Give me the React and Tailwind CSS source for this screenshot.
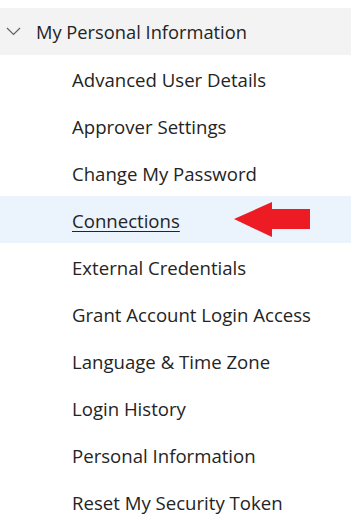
import React from 'react';

const items = [
  'Advanced User Details',
  'Approver Settings',
  'Change My Password',
  'Connections',
  'External Credentials',
  'Grant Account Login Access',
  'Language & Time Zone',
  'Login History',
  'Personal Information',
  'Reset My Security Token',
];

const App = () => {
  return (
    <div className="w-[351px] h-[525px] overflow-hidden bg-white pt-2 text-[#242424]" style={{ fontFamily: '"Open Sans", sans-serif' }}>
      {/* Section header */}
      <div className="h-[47px] flex items-center bg-[#f3f3f3]">
        <svg className="ml-[6px] w-[15px] h-[9px]" viewBox="0 0 15 9" fill="none">
          <path d="M1 1 L7.5 7.5 L14 1" stroke="#616161" strokeWidth="1.2" />
        </svg>
        <span className="ml-[15px] text-[18.3px]">My Personal Information</span>
      </div>

      {/* Items */}
      {items.map((label) => {
        const active = label === 'Connections';
        return (
          <div
            key={label}
            className={`h-[47px] flex items-center pl-[72px] ${active ? 'bg-[#ebf3fc]' : ''}`}
          >
            <span className={`text-[18.6px] pt-[2px] ${active ? 'underline underline-offset-[3px]' : ''}`}>{label}</span>
            {active && (
              <svg className="ml-auto mr-[41px] w-[76px] h-[35px]" viewBox="0 0 76 35" fill="#ed1c24">
                <path d="M0 17 L38 0 L38 7 L76 7 L76 27 L38 27 L38 35 Z" />
              </svg>
            )}
          </div>
        );
      })}
    </div>
  );
};

export default App;
